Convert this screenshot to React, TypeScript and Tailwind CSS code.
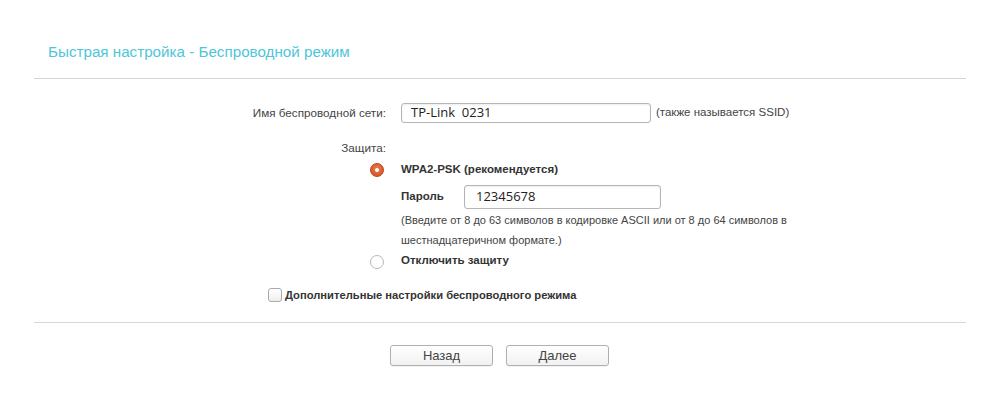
import React from "react";

export default function App() {
  const sans = { fontFamily: '"Liberation Sans", Arial, sans-serif' };
  const inputFont = { fontFamily: '"Open Sans", "DejaVu Sans", sans-serif' };
  return (
    <div className="w-[1000px] h-[396px] bg-white text-[#333]" style={sans}>
      <div className="px-[34px]">
        <div className="pt-[43px] pl-[14px] h-[78px] text-[15.2px] leading-[18px] text-[#4ec6d8]">
          Быстрая настройка - Беспроводной режим
        </div>
        <div className="h-px bg-[#d6d6d6]" />

        {/* SSID row */}
        <div className="mt-[24px] flex items-center h-[20px]">
          <div className="w-[352px] text-right text-[11.7px] text-[#444]">Имя беспроводной сети:</div>
          <div className="ml-[15px] w-[250px] h-[20px] border border-[#b5b5b5] rounded-[3px] bg-white flex items-center pl-[9px] text-[13px] text-[#222] shadow-[inset_0_1px_2px_rgba(0,0,0,0.08)]" style={inputFont}>
            TP-Link&nbsp;&nbsp;0231
          </div>
          <div className="ml-[5px] text-[11.5px] text-[#444]">(также называется SSID)</div>
        </div>

        {/* Защита label */}
        <div className="mt-[15px] flex items-center h-[20px]">
          <div className="w-[352px] text-right text-[11.7px] text-[#444]">Защита:</div>
        </div>

        {/* WPA2 row */}
        <div className="mt-[2px] flex items-center h-[20px]">
          <div className="w-[352px] flex justify-end pr-[2px]">
            <div className="w-[14px] h-[14px] rounded-full bg-[radial-gradient(circle_at_50%_40%,#f07c4c,#cc4a1c)] border border-[#bb4519] flex items-center justify-center">
              <div className="w-[4px] h-[4px] rounded-full bg-white" />
            </div>
          </div>
          <div className="ml-[15px] text-[11.5px] font-bold text-[#333]">WPA2-PSK (рекомендуется)</div>
        </div>

        {/* Password row */}
        <div className="mt-[5px] flex items-center h-[24px]">
          <div className="w-[352px]" />
          <div className="ml-[15px] w-[63px] text-[11.5px] font-bold text-[#333]">Пароль</div>
          <div className="w-[197px] h-[24px] border border-[#b5b5b5] rounded-[3px] bg-white flex items-center pl-[11px] text-[13px] text-[#222] shadow-[inset_0_1px_2px_rgba(0,0,0,0.08)]" style={inputFont}>
            12345678
          </div>
        </div>

        {/* Help text */}
        <div className="mt-[1px] flex">
          <div className="w-[352px]" />
          <div className="ml-[15px] w-[420px] text-[11px] leading-[20px] text-[#444]">
            (Введите от 8 до 63 символов в кодировке ASCII или от 8 до 64 символов в
            <br />
            шестнадцатеричном формате.)
          </div>
        </div>

        {/* Disable row */}
        <div className="flex items-center h-[20px]">
          <div className="w-[352px] flex justify-end pr-[2px]">
            <div className="w-[14px] h-[14px] mt-[3px] rounded-full border border-[#b8b8b8] bg-white" />
          </div>
          <div className="ml-[15px] mt-[1px] text-[11.5px] font-bold text-[#333]">Отключить защиту</div>
        </div>

        {/* Advanced checkbox */}
        <div className="mt-[15px] flex items-center h-[20px] pl-[234px]">
          <div className="w-[14px] h-[14px] rounded-[3px] border border-[#aaa] bg-[linear-gradient(#fff,#eee)]" />
          <div className="ml-[3px] text-[11.2px] font-bold text-[#333]">Дополнительные настройки беспроводного режима</div>
        </div>

        <div className="mt-[17px] h-px bg-[#d6d6d6]" />

        {/* Buttons */}
        <div className="mt-[22px] flex pl-[356px] gap-[13px]">
          <button className="w-[103px] h-[21px] border border-[#b0b0b0] rounded-[3px] bg-[linear-gradient(#ffffff,#f1f1f1)] text-[13px] text-[#444] leading-none shadow-[0_1px_1px_rgba(0,0,0,0.06)]" style={sans}>
            Назад
          </button>
          <button className="w-[103px] h-[21px] border border-[#b0b0b0] rounded-[3px] bg-[linear-gradient(#ffffff,#f1f1f1)] text-[13px] text-[#444] leading-none shadow-[0_1px_1px_rgba(0,0,0,0.06)]" style={sans}>
            Далее
          </button>
        </div>
      </div>
    </div>
  );
}
